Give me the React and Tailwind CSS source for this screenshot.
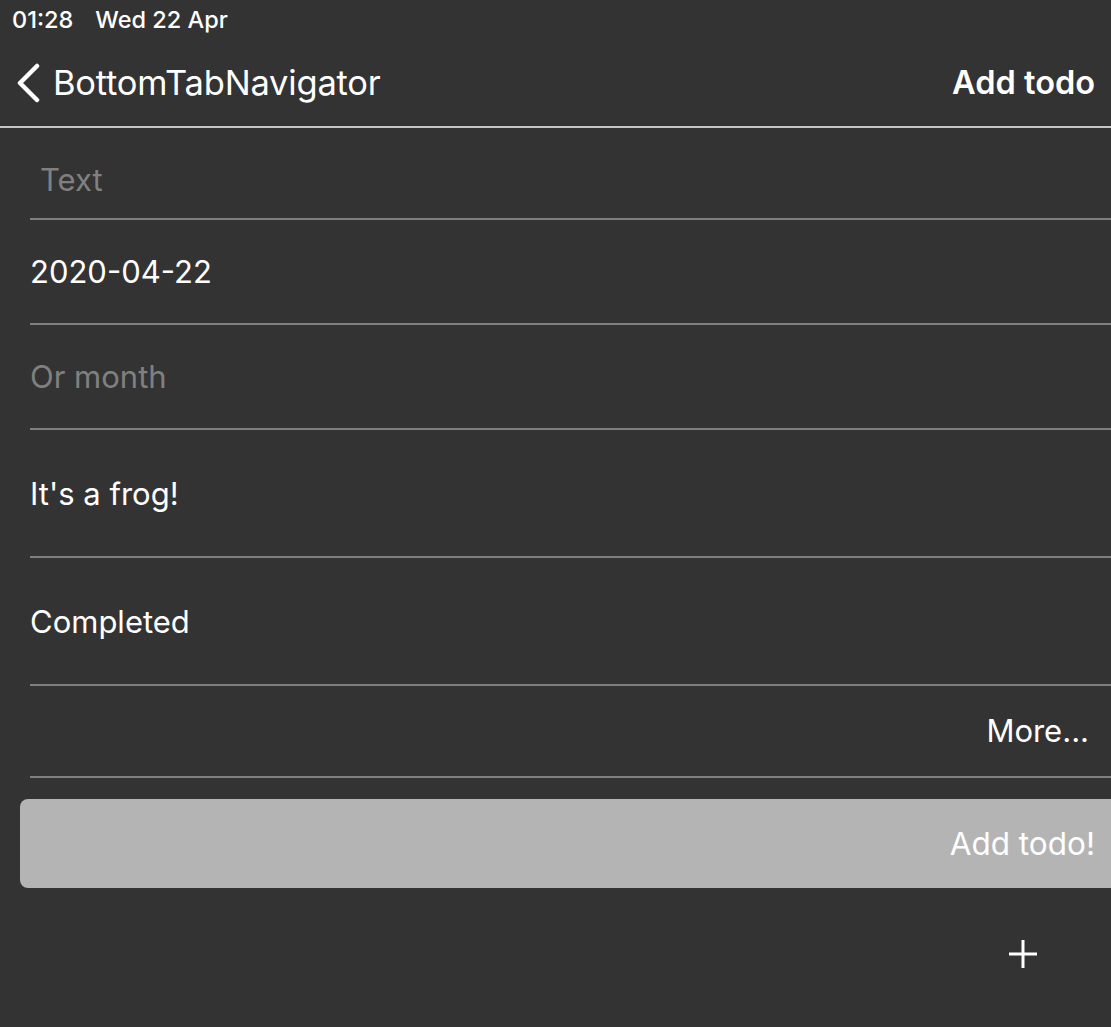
const font = { fontFamily: 'Inter, "Noto Sans", sans-serif' };

function Field({ children, height, placeholder, indent }) {
  return (
    <div className={`ml-[30px] flex items-center border-b-2 border-[#7f7f7f] ${height}`}>
      <span
        className={`text-[31px] leading-none ${indent ? 'pl-[10px]' : ''} ${
          placeholder ? 'text-[#808080]' : 'text-white'
        }`}
      >
        {children}
      </span>
    </div>
  );
}

export default function App() {
  return (
    <div className="w-[1111px] h-[1027px] bg-[#333333] text-white overflow-hidden" style={font}>
      {/* Status bar */}
      <div className="h-[40px] flex items-center gap-[22px] pl-[12px] text-[23.5px] font-medium">
        <span>01:28</span>
        <span>Wed 22 Apr</span>
      </div>

      {/* Nav bar */}
      <div className="h-[88px] flex items-center justify-between pr-[16px] border-b-2 border-[#c4c4c4]">
        <div className="flex items-center">
          <svg width="30" height="40" viewBox="0 0 30 40" className="ml-[13px] mr-[10px]">
            <path d="M24 3 L7 20 L24 37" fill="none" stroke="white" strokeWidth="4.5" strokeLinecap="round" strokeLinejoin="round" />
          </svg>
          <span className="text-[34.5px] tracking-[-0.2px]">BottomTabNavigator</span>
        </div>
        <span className="text-[32.5px] font-semibold">Add todo</span>
      </div>

      {/* Form */}
      <div className="flex flex-col">
        <div className="pt-[14px]">
          <Field height="h-[78px] items-start pt-[22px]" placeholder indent>
            Text
          </Field>
        </div>
        <Field height="h-[105px]">2020-04-22</Field>
        <Field height="h-[105px]" placeholder>
          Or month
        </Field>
        <Field height="h-[128px]">It's a frog!</Field>
        <Field height="h-[128px]">Completed</Field>
        <div className="ml-[30px] h-[92px] flex items-center justify-end pr-[22px] border-b-2 border-[#7f7f7f]">
          <span className="text-[31px]">More...</span>
        </div>

        <div className="ml-[20px] mt-[21px] h-[89px] rounded-l-[8px] bg-[#b4b4b4] flex items-center justify-end pr-[16px]">
          <span className="text-[31.5px] text-white">Add todo!</span>
        </div>

        <div className="flex justify-end pr-[72px] pt-[50px]">
          <svg width="32" height="32" viewBox="0 0 32 32">
            <path d="M16 2v28M2 16h28" stroke="white" strokeWidth="3" />
          </svg>
        </div>
      </div>
    </div>
  );
}
